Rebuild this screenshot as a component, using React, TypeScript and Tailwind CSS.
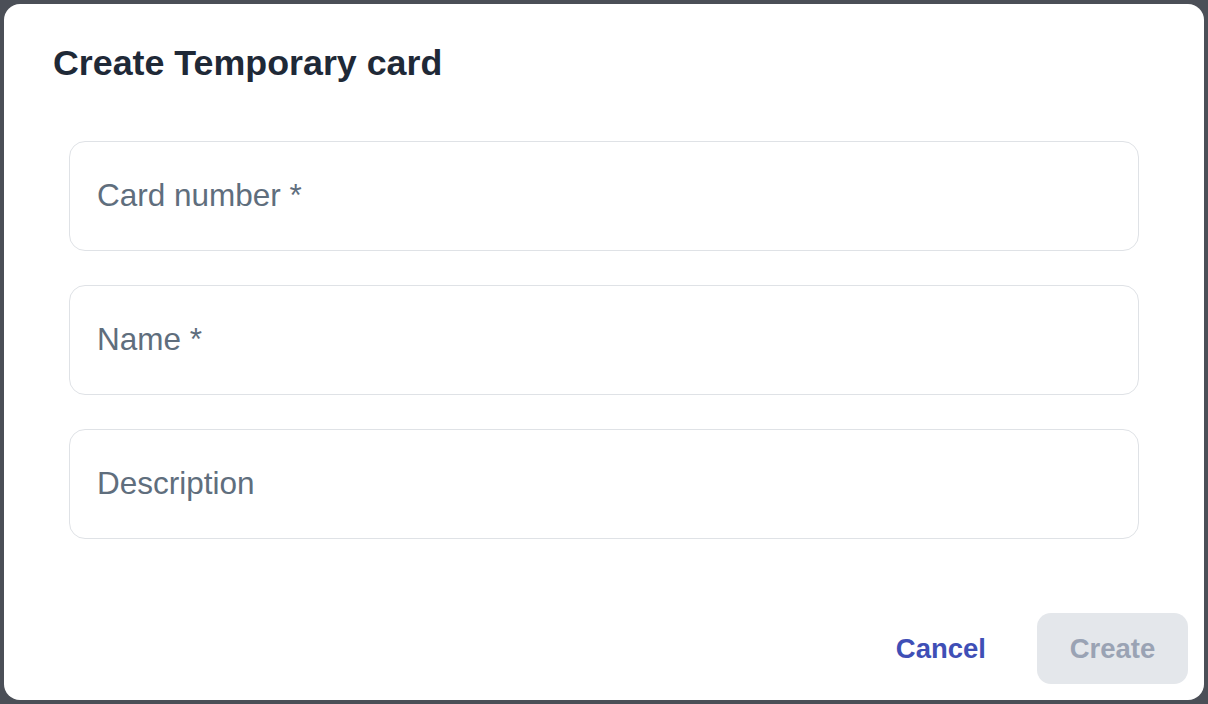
import React from "react";

function Field({ label, required }: { label: string; required?: boolean }) {
  return (
    <div className="h-[110px] rounded-[16px] border-[1.5px] border-[#dfe2e6] flex items-center px-[27px]">
      <span className="text-[31.5px] leading-none text-[#5f6e7d]">
        {label}
        {required ? " *" : ""}
      </span>
    </div>
  );
}

export default function App() {
  return (
    <div
      className="h-[704px] w-[1208px] bg-[#4b4f57] p-[4px]"
      style={{ fontFamily: '"Liberation Sans", Arial, Helvetica, sans-serif' }}
    >
      <div className="h-full w-full bg-white rounded-[16px] flex flex-col">
        <h1 className="pt-[42px] px-[49px] text-[35.8px] leading-none font-bold text-[#1f2937]">
          Create Temporary card
        </h1>
        <div className="mt-[59px] px-[65px] flex flex-col gap-[34px]">
          <Field label="Card number" required />
          <Field label="Name" required />
          <Field label="Description" />
        </div>
        <div className="mt-auto flex items-center justify-end gap-[27px] pr-[16px] pb-[16px]">
          <button className="h-[71px] px-[24px] rounded-[14px] text-[27.5px] font-bold text-[#3f4fb6]">
            Cancel
          </button>
          <button className="h-[71px] w-[151px] rounded-[14px] bg-[#e4e7eb] text-[27.5px] font-bold text-[#9aa3b4]">
            Create
          </button>
        </div>
      </div>
    </div>
  );
}
